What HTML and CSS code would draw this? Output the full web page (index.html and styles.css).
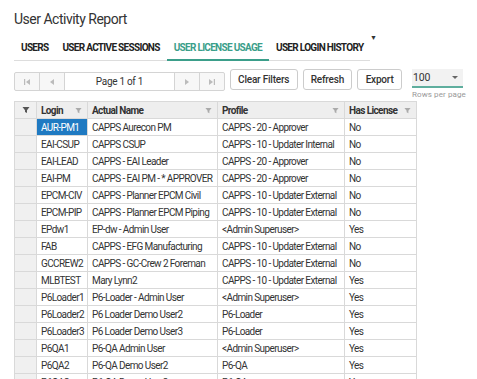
FILE: index.html
```html
<!DOCTYPE html>
<html lang="en">
<head>
    <meta charset="UTF-8">
    <meta name="viewport" content="width=device-width, initial-scale=1.0">
    <title>User Activity Report</title>
    <link rel="stylesheet" href="styles.css">
</head>
<body>

<div class="report">
    <h1 class="title">User Activity Report</h1>

    <!-- Tabs -->
    <div class="tabs-wrap">
        <div class="tabs">
            <div class="tab">USERS</div>
            <div class="tab">USER ACTIVE SESSIONS</div>
            <div class="tab active">USER LICENSE USAGE</div>
            <div class="tab">USER LOGIN HISTORY</div>
        </div>
        <span class="tabs-more">&#9660;</span>
    </div>

    <!-- Toolbar -->
    <div class="toolbar">
        <div class="pager">
            <span class="pager-btn">
                <svg width="8" height="8" viewBox="0 0 8 8"><rect x="1" y="1" width="1.2" height="6" fill="#bbb"/><path d="M7 1 L3 4 L7 7 Z" fill="#bbb"/></svg>
            </span>
            <span class="pager-btn">
                <svg width="8" height="8" viewBox="0 0 8 8"><path d="M6 1 L2 4 L6 7 Z" fill="#bbb"/></svg>
            </span>
            <span class="pager-text">Page 1 of 1</span>
            <span class="pager-btn">
                <svg width="8" height="8" viewBox="0 0 8 8"><path d="M2 1 L6 4 L2 7 Z" fill="#bbb"/></svg>
            </span>
            <span class="pager-btn">
                <svg width="8" height="8" viewBox="0 0 8 8"><path d="M1 1 L5 4 L1 7 Z" fill="#bbb"/><rect x="5.8" y="1" width="1.2" height="6" fill="#bbb"/></svg>
            </span>
        </div>
        <button class="tool-btn clear-btn">Clear Filters</button>
        <button class="tool-btn refresh-btn">Refresh</button>
        <button class="tool-btn export-btn">Export</button>
        <div class="rows-select">
            <div class="select-box">
                <span>100</span>
                <span class="caret"></span>
            </div>
            <div class="select-hint">Rows per page</div>
        </div>
    </div>

    <!-- Grid -->
    <table class="grid">
        <colgroup>
            <col class="c-handle">
            <col class="c-login">
            <col class="c-name">
            <col class="c-profile">
            <col class="c-license">
        </colgroup>
        <thead>
        <tr>
            <th class="handle"><svg class="funnel dark" viewBox="0 0 8 8"><path d="M0.5 1 H7.5 L5 4.2 V7 L3 6 V4.2 Z" fill="#555"/></svg></th>
            <th><div class="th-in">Login <svg class="funnel" viewBox="0 0 8 8"><path d="M0.5 1 H7.5 L5 4.2 V7 L3 6 V4.2 Z" fill="#aaa"/></svg></div></th>
            <th><div class="th-in">Actual Name <svg class="funnel" viewBox="0 0 8 8"><path d="M0.5 1 H7.5 L5 4.2 V7 L3 6 V4.2 Z" fill="#aaa"/></svg></div></th>
            <th><div class="th-in">Profile <svg class="funnel" viewBox="0 0 8 8"><path d="M0.5 1 H7.5 L5 4.2 V7 L3 6 V4.2 Z" fill="#aaa"/></svg></div></th>
            <th><div class="th-in">Has License <svg class="funnel" viewBox="0 0 8 8"><path d="M0.5 1 H7.5 L5 4.2 V7 L3 6 V4.2 Z" fill="#aaa"/></svg></div></th>
        </tr>
        </thead>
        <tbody>
        <tr><td class="handle"></td><td class="selected">AUR-PM1</td><td>CAPPS Aurecon PM</td><td>CAPPS - 20 - Approver</td><td>No</td></tr>
        <tr><td class="handle"></td><td>EAI-CSUP</td><td>CAPPS CSUP</td><td>CAPPS - 10 - Updater Internal</td><td>No</td></tr>
        <tr><td class="handle"></td><td>EAI-LEAD</td><td>CAPPS - EAI Leader</td><td>CAPPS - 20 - Approver</td><td>No</td></tr>
        <tr><td class="handle"></td><td>EAI-PM</td><td>CAPPS - EAI PM - * APPROVER</td><td>CAPPS - 20 - Approver</td><td>No</td></tr>
        <tr><td class="handle"></td><td>EPCM-CIV</td><td>CAPPS - Planner EPCM Civil</td><td>CAPPS - 10 - Updater External</td><td>No</td></tr>
        <tr><td class="handle"></td><td>EPCM-PIP</td><td>CAPPS - Planner EPCM Piping</td><td>CAPPS - 10 - Updater External</td><td>No</td></tr>
        <tr><td class="handle"></td><td>EPdw1</td><td>EP-dw - Admin User</td><td>&lt;Admin Superuser&gt;</td><td>Yes</td></tr>
        <tr><td class="handle"></td><td>FAB</td><td>CAPPS - EFG Manufacturing</td><td>CAPPS - 10 - Updater External</td><td>No</td></tr>
        <tr><td class="handle"></td><td>GCCREW2</td><td>CAPPS - GC-Crew 2 Foreman</td><td>CAPPS - 10 - Updater External</td><td>No</td></tr>
        <tr><td class="handle"></td><td>MLBTEST</td><td>Mary Lynn2</td><td>CAPPS - 10 - Updater External</td><td>Yes</td></tr>
        <tr><td class="handle"></td><td>P6Loader1</td><td>P6-Loader - Admin User</td><td>&lt;Admin Superuser&gt;</td><td>Yes</td></tr>
        <tr><td class="handle"></td><td>P6Loader2</td><td>P6 Loader Demo User2</td><td>P6-Loader</td><td>Yes</td></tr>
        <tr><td class="handle"></td><td>P6Loader3</td><td>P6 Loader Demo User3</td><td>P6-Loader</td><td>Yes</td></tr>
        <tr><td class="handle"></td><td>P6QA1</td><td>P6-QA Admin User</td><td>&lt;Admin Superuser&gt;</td><td>Yes</td></tr>
        <tr><td class="handle"></td><td>P6QA2</td><td>P6-QA Demo User2</td><td>P6-QA</td><td>Yes</td></tr>
        <tr><td class="handle"></td><td>P6QA3</td><td>P6-QA Demo User3</td><td>P6-QA</td><td>Yes</td></tr>
        </tbody>
    </table>
</div>

</body>
</html>
```

FILE: styles.css
```css
/* styles.css */
html, body {
    margin: 0;
    background: #fff;
    overflow: hidden;
}

body {
    font-family: Roboto, "Liberation Sans", Arial, sans-serif;
    color: #333;
    letter-spacing: -0.6px;
}

.report {
    padding: 10px 14px 0 14px;
}

.title {
    font-size: 14px;
    font-weight: 400;
    line-height: 18px;
    letter-spacing: -0.5px;
    margin: 0;
    color: #333;
}

/* tabs */
.tabs-wrap {
    display: flex;
    align-items: flex-start;
    margin-top: 6px;
}

.tabs {
    display: flex;
    width: 356px;
    border-bottom: 1px solid #ddd;
}

.tab {
    padding: 8px 7px 5px 7px;
    font-size: 10px;
    font-weight: 700;
    line-height: 12px;
    letter-spacing: -0.7px;
    color: #222;
    white-space: nowrap;
    border-bottom: 2px solid transparent;
    margin-bottom: -1px;
}

.tab.active {
    color: #3b9e8a;
    border-bottom-color: #3b9e8a;
}

.tabs-more {
    font-size: 7px;
    color: #333;
    line-height: 8px;
    margin-top: 0;
}

/* toolbar */
.toolbar {
    display: flex;
    align-items: flex-start;
    margin-top: 8px;
    height: 32px;
}

.pager {
    display: flex;
    height: 17px;
    width: 210px;
    margin-top: 3px;
    border: 1px solid #d4d4d4;
    border-radius: 2px;
    background: #f7f7f7;
}

.pager-btn {
    width: 24px;
    display: flex;
    align-items: center;
    justify-content: center;
    border-right: 1px solid #d4d4d4;
}

.pager-btn:nth-child(4) {
    border-left: 1px solid #d4d4d4;
}

.pager-btn:last-child {
    border-right: none;
}

.pager-text {
    flex: 1;
    background: #fff;
    text-align: center;
    font-size: 10px;
    line-height: 17px;
    letter-spacing: -0.3px;
    color: #333;
}

.tool-btn {
    height: 21px;
    margin-left: 5px;
    padding: 0;
    background: #fff;
    border: 1px solid #ccc;
    border-radius: 3px;
    font-family: inherit;
    font-size: 10px;
    font-weight: 500;
    letter-spacing: -0.2px;
    white-space: nowrap;
    color: #333;
}

.clear-btn {
    width: 68px;
}

.refresh-btn {
    width: 50px;
}

.export-btn {
    width: 45px;
}

.rows-select {
    margin-left: 10px;
    width: 51px;
}

.select-box {
    display: flex;
    justify-content: space-between;
    align-items: center;
    height: 17px;
    background: #f2f2f2;
    border-bottom: 2px solid #5fae9e;
    font-size: 10.5px;
    letter-spacing: -0.2px;
    color: #333;
    padding-left: 1px;
}

.caret {
    width: 0;
    height: 0;
    border-left: 3px solid transparent;
    border-right: 3px solid transparent;
    border-top: 3px solid #666;
    margin-right: 5px;
}

.select-hint {
    font-size: 8px;
    letter-spacing: 0.1px;
    color: #999;
    margin-top: 2px;
    white-space: nowrap;
}

/* grid */
.grid {
    border-collapse: collapse;
    table-layout: fixed;
    width: 402px;
    font-size: 10px;
}

.c-handle { width: 22px; }
.c-login { width: 51px; }
.c-name { width: 130px; }
.c-profile { width: 127px; }
.c-license { width: 72px; }

.grid th,
.grid td {
    border: 1px solid #d9d9d9;
    height: 16px;
    padding: 0 4px;
    text-align: left;
    white-space: nowrap;
    overflow: hidden;
    color: #333;
}

.grid th {
    background: #eeeeee;
    font-weight: 700;
}

.th-in {
    display: flex;
    justify-content: space-between;
    align-items: center;
}

.funnel {
    width: 7px;
    height: 7px;
    margin-right: 1px;
}

.grid .handle {
    background: #f0f0f0;
    padding: 0;
    text-align: center;
}

.funnel.dark {
    width: 8px;
    height: 8px;
    margin: 0;
}

.grid td.selected {
    background: #1f7ac2;
    color: #fff;
}
```
